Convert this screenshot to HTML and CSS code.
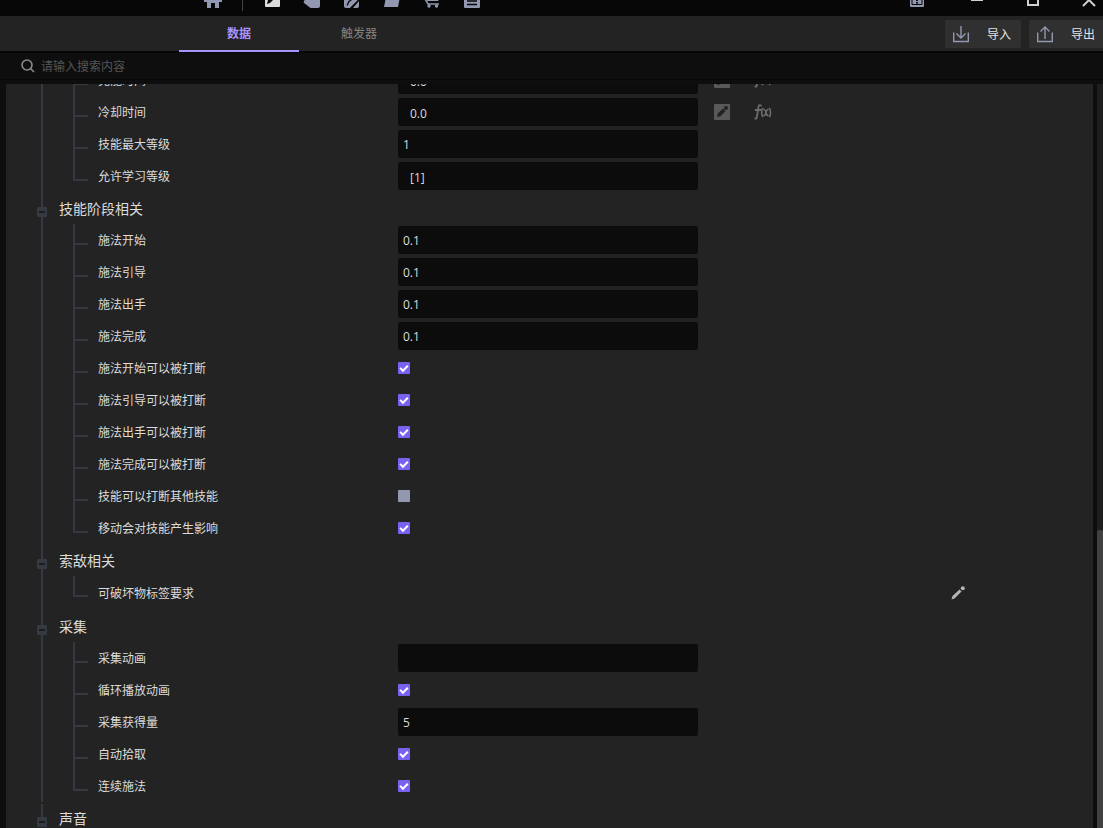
FILE: index.html
```html
<!DOCTYPE html>
<html lang="zh-CN">
<head>
<meta charset="utf-8">
<title>技能数据</title>
<link rel="stylesheet" href="styles.css">
</head>
<body>
<svg class="sprite" aria-hidden="true">
  <symbol id="edit-box" viewBox="0 0 16 16"><rect width="16" height="16" rx="1" fill="#595959"/><path d="M3 13l.8-3.400 5.200-5.200 2.600 2.600-5.200 5.200z" fill="#222"/><circle cx="12" cy="4" r="2" fill="#222"/></symbol>
  <symbol id="fx" viewBox="0 0 18 16"><g fill="none" stroke="#6c6c6c" stroke-width="1.800" stroke-linecap="round"><path d="M7 1.500c-2-1-2.400 0-2.700 2L3 12.500c-.3 2-.8 2.500-1.800 2M1.500 6h5"/><path d="M8.500 4.500q-1.600 4 0 8M15.700 4.500q1.600 4 0 8M10 5.500q1.300 0 2 3t2 3M14 5.500q-1.300 0-2 3t-2 3" stroke-width="1.600"/></g></symbol>
</svg>
<div class="app">
  <header class="titlebar">
    <nav class="tools" aria-label="工具">
      <button class="tool" aria-label="主页"><svg viewBox="0 0 20 16"><path d="M10-1L1 8v2h3v6h4v-5h4v5h4v-6h3V8z"/></svg></button>
      <span class="divider"></span>
      <button class="tool active" aria-label="技能"><svg viewBox="0 0 20 16"><rect x="3" width="15" height="15" rx="1"/><path d="M5 12l1-4 4-4 3 2-5 5z" fill="#070707"/></svg></button>
      <button class="tool" aria-label="标签"><svg viewBox="0 0 20 16"><path d="M18 0v14q0 2-2 2H9q-1 0-3-2l-4-3q-1-2 1-3h4V0z"/></svg></button>
      <button class="tool" aria-label="编辑"><svg viewBox="0 0 20 16"><path d="M2 0h14v8l-8 8H4q-2 0-2-2z"/><path d="M5 13.500l2-4L14 4M9 16l8-8" fill="none" stroke="#070707" stroke-width="1.300"/><path d="M11 16l6-7v5q0 2-2 2z"/></svg></button>
      <button class="tool" aria-label="文件夹"><svg viewBox="0 0 20 16"><path d="M4 5h14l-2 10H2z"/></svg></button>
      <button class="tool" aria-label="商店"><svg viewBox="0 0 20 16"><path d="M3 6h15l-2 3H5z"/><path d="M3 7l3 5h11" fill="none" stroke="currentColor" stroke-width="1.500"/><circle cx="7" cy="14" r="1.700"/><circle cx="14.500" cy="14" r="1.700"/></svg></button>
      <button class="tool" aria-label="列表"><svg viewBox="0 0 20 16"><rect x="2" width="16" height="16" rx="1"/><path d="M5 9h10M5 12.500h10" stroke="#070707" stroke-width="1.500"/></svg></button>
    </nav>
    <div class="window-buttons">
      <button class="win save" aria-label="保存"><svg viewBox="0 0 14 16"><rect width="14" height="15" rx="1"/><path d="M2 7v5.500h10V7" fill="none" stroke="#070707"/><path d="M7 7v2M7 10v1.500" stroke="#070707" stroke-width="2"/></svg></button>
      <button class="win" aria-label="最小化"><svg viewBox="0 0 14 16"><path d="M1 8h12" stroke-width="2"/></svg></button>
      <button class="win" aria-label="最大化"><svg viewBox="0 0 14 16"><rect x="2" y="3" width="10" height="10" stroke-width="2" fill="none"/></svg></button>
      <button class="win" aria-label="关闭"><svg viewBox="0 0 14 16"><path d="M1 2l12 12M13 2L1 14" stroke-width="2"/></svg></button>
    </div>
  </header>
  <div class="tabbar">
    <div class="tabs" role="tablist">
      <button class="tab selected" role="tab" aria-selected="true">数据</button>
      <button class="tab" role="tab" aria-selected="false">触发器</button>
    </div>
    <div class="actions">
      <button class="action"><svg viewBox="0 0 16 18"><path d="M.7 7.500v9h14.600v-9M8 1v12M3.500 8.500L8 13l4.500-4.500"/></svg>导入</button>
      <button class="action"><svg viewBox="0 0 16 18"><path d="M.7 7.500v9h14.600v-9M8 14V2M3.500 6.500L8 2l4.500 4.500"/></svg>导出</button>
    </div>
  </div>
  <label class="search">
    <svg viewBox="0 0 14 14"><circle cx="6" cy="6" r="5"/><path d="M9.500 9.500L13 13"/></svg>
    <input type="search" placeholder="请输入搜索内容" aria-label="搜索">
  </label>
  <div class="workspace">
    <main class="panel">
      <section class="group first">
        <div class="row"><label for="f1">充能时间</label><input class="field inset" id="f1" value="0.0"><button class="aux" aria-label="编辑"><svg><use href="#edit-box"/></svg></button><button class="aux" aria-label="公式"><svg><use href="#fx"/></svg></button></div>
        <div class="row"><label for="f2">冷却时间</label><input class="field inset" id="f2" value="0.0"><button class="aux" aria-label="编辑"><svg><use href="#edit-box"/></svg></button><button class="aux" aria-label="公式"><svg><use href="#fx"/></svg></button></div>
        <div class="row"><label for="f3">技能最大等级</label><input class="field" id="f3" value="1"></div>
        <div class="row"><label for="f4">允许学习等级</label><input class="field inset" id="f4" value="[1]"></div>
      </section>
      <section class="group">
        <h2><button class="fold" aria-label="收起"></button>技能阶段相关</h2>
        <div class="row"><label for="f5">施法开始</label><input class="field" id="f5" value="0.1"></div>
        <div class="row"><label for="f6">施法引导</label><input class="field" id="f6" value="0.1"></div>
        <div class="row"><label for="f7">施法出手</label><input class="field" id="f7" value="0.1"></div>
        <div class="row"><label for="f8">施法完成</label><input class="field" id="f8" value="0.1"></div>
        <div class="row"><label for="c1">施法开始可以被打断</label><input class="check" type="checkbox" id="c1" checked></div>
        <div class="row"><label for="c2">施法引导可以被打断</label><input class="check" type="checkbox" id="c2" checked></div>
        <div class="row"><label for="c3">施法出手可以被打断</label><input class="check" type="checkbox" id="c3" checked></div>
        <div class="row"><label for="c4">施法完成可以被打断</label><input class="check" type="checkbox" id="c4" checked></div>
        <div class="row"><label for="c5">技能可以打断其他技能</label><input class="check" type="checkbox" id="c5"></div>
        <div class="row"><label for="c6">移动会对技能产生影响</label><input class="check" type="checkbox" id="c6" checked></div>
      </section>
      <section class="group">
        <h2><button class="fold" aria-label="收起"></button>索敌相关</h2>
        <div class="row tall"><label for="b1">可破坏物标签要求</label><button class="pencil" id="b1"><svg viewBox="0 0 14 14"><path d="M.5 13.500l1-3.500L8.500 3.500l2 2-7 7z"/><circle cx="11.800" cy="2.200" r="2"/></svg></button></div>
      </section>
      <section class="group">
        <h2><button class="fold" aria-label="收起"></button>采集</h2>
        <div class="row"><label for="f9">采集动画</label><input class="field" id="f9" value=""></div>
        <div class="row"><label for="c7">循环播放动画</label><input class="check" type="checkbox" id="c7" checked></div>
        <div class="row"><label for="f10">采集获得量</label><input class="field" id="f10" value="5"></div>
        <div class="row"><label for="c8">自动拾取</label><input class="check" type="checkbox" id="c8" checked></div>
        <div class="row"><label for="c9">连续施法</label><input class="check" type="checkbox" id="c9" checked></div>
      </section>
      <section class="group last">
        <h2><button class="fold" aria-label="收起"></button>声音</h2>
      </section>
    </main>
    <div class="scrollbar"><div class="thumb"></div></div>
  </div>
</div>
</body>
</html>
```
FILE: styles.css
```css
*, *::before { box-sizing: border-box; }
body {
  margin: 0;
  background: #0e0e0e;
  color: #dcdcdc;
  font: 12px/16px "Noto Sans CJK SC", sans-serif;
}
button, input { margin: 0; padding: 0; border: 0; background: none; color: inherit; font: inherit; }
button { cursor: pointer; }
svg { display: block; flex: none; }
.sprite { display: none; }
.app { display: flex; flex-direction: column; height: 100vh; overflow: hidden; }

.titlebar {
  display: flex;
  flex: none;
  justify-content: space-between;
  height: 16px;
  padding-left: 203px;
  background: #070707;
  overflow: hidden;
}
.tools, .window-buttons { display: flex; align-items: flex-start; }
.tool { width: 20px; margin: -8px 20px 0 0; color: #9298b0; }
.tool:first-child { margin-right: 19px; }
.tool svg { width: 20px; height: 16px; fill: currentColor; overflow: visible; }
.tool.active { color: #dcdcdc; }
.divider { width: 1px; height: 11px; margin-right: 19px; background: #444; }
.window-buttons { gap: 42px; padding-right: 7px; }
.win { width: 14px; margin-top: -8px; }
.win svg { width: 14px; height: 16px; stroke: #d0d0d0; }
.win.save svg { fill: #9298b0; stroke: none; }
.window-buttons .save { margin-right: 4px; }

.tabbar {
  display: flex;
  flex: none;
  justify-content: space-between;
  height: 37px;
  padding-left: 179px;
  background: #232323;
  border-bottom: 2px solid #070707;
}
.tabs { display: flex; }
.tab { width: 120px; height: 36px; color: #858585; border-bottom: 2px solid transparent; }
.tab.selected { color: #a894ff; border-color: #a894ff; font-weight: 700; }
.actions { display: flex; align-items: flex-start; gap: 8px; padding-top: 4px; }
.action {
  display: flex;
  align-items: center;
  justify-content: space-between;
  width: 76px;
  height: 28px;
  padding: 0 10px 0 8px;
  background: #303030;
  border-radius: 2px;
  color: #e4e4e4;
}
.action:last-child { width: 74px; padding-right: 8px; border-radius: 2px 0 0 2px; }
.action svg { width: 16px; height: 18px; fill: none; stroke: #9298b0; stroke-width: 1.4; }

.search {
  display: flex;
  flex: none;
  align-items: center;
  gap: 6px;
  height: 27px;
  padding-left: 21px;
  border-bottom: 1px solid #070707;
}
.search svg { width: 14px; height: 14px; fill: none; stroke: #8c8c8c; stroke-width: 1.6; }
.search input { flex: 1; outline: 0; }
.search input::placeholder { color: #555; opacity: 1; }

.workspace { display: flex; flex: 1; gap: 4px; min-height: 0; padding: 4px 0 0 6px; }
.panel { flex: 1; min-width: 0; overflow: hidden; background: #232323; }
.scrollbar { display: flex; align-items: flex-end; width: 6px; background: #1e1e1e; }
.thumb { width: 100%; height: 40%; background: #404040; border-radius: 2px 2px 0 0; }

.group { background: linear-gradient(#353942, #353942) 35px 0 / 2px 100% no-repeat; }
.first { margin-top: -20px; }
.last { background-position: 35px 2px; background-size: 2px 16px; }
h2 {
  display: flex;
  align-items: center;
  gap: 12px;
  height: 32px;
  margin: 0;
  padding: 0 0 0 31px;
  font-size: 14px;
  font-weight: 400;
}
.fold {
  display: flex;
  align-items: center;
  justify-content: center;
  width: 10px;
  height: 10px;
  margin-top: 8px;
  background: #353942;
  border-radius: 1px;
}
.fold::before { content: ""; width: 6px; height: 2px; background: #1d1e21; }
.row {
  display: flex;
  align-items: center;
  height: 32px;
  margin-left: 67px;
  padding-left: 25px;
  background:
    linear-gradient(#353942, #353942) 0 0 / 2px 100% no-repeat,
    linear-gradient(#353942, #353942) 0 19px / 15px 2px no-repeat;
}
.row:last-child { background-size: 2px 21px, 15px 2px; }
.row.tall { height: 34px; }
.row label { flex: none; width: 300px; }
.field {
  width: 300px;
  height: 28px;
  padding: 0 5px;
  background: #0c0c0c;
  border-radius: 2px;
  outline: 0;
  font-family: "Open Sans", sans-serif;
}
.field.inset { padding: 2px 12px 0; }
.aux { width: 18px; margin-left: 16px; }
.aux + .aux { margin-left: 22px; }
.aux svg { width: 16px; height: 16px; }
.aux + .aux svg { width: 18px; }
.check {
  appearance: none;
  width: 12px;
  height: 12px;
  background: #9298b0;
  border-radius: 1px;
}
.check:checked { background: #7b61f0; }
.check:checked::before {
  content: "";
  display: block;
  width: 8px;
  height: 5px;
  margin: 3px 0 0 2px;
  border: solid #fff;
  border-width: 0 0 2px 2px;
  transform: rotate(-45deg);
}
.pencil { margin: 0 128px 0 auto; }
.pencil svg { width: 14px; height: 14px; fill: #b5b5b5; }
```
